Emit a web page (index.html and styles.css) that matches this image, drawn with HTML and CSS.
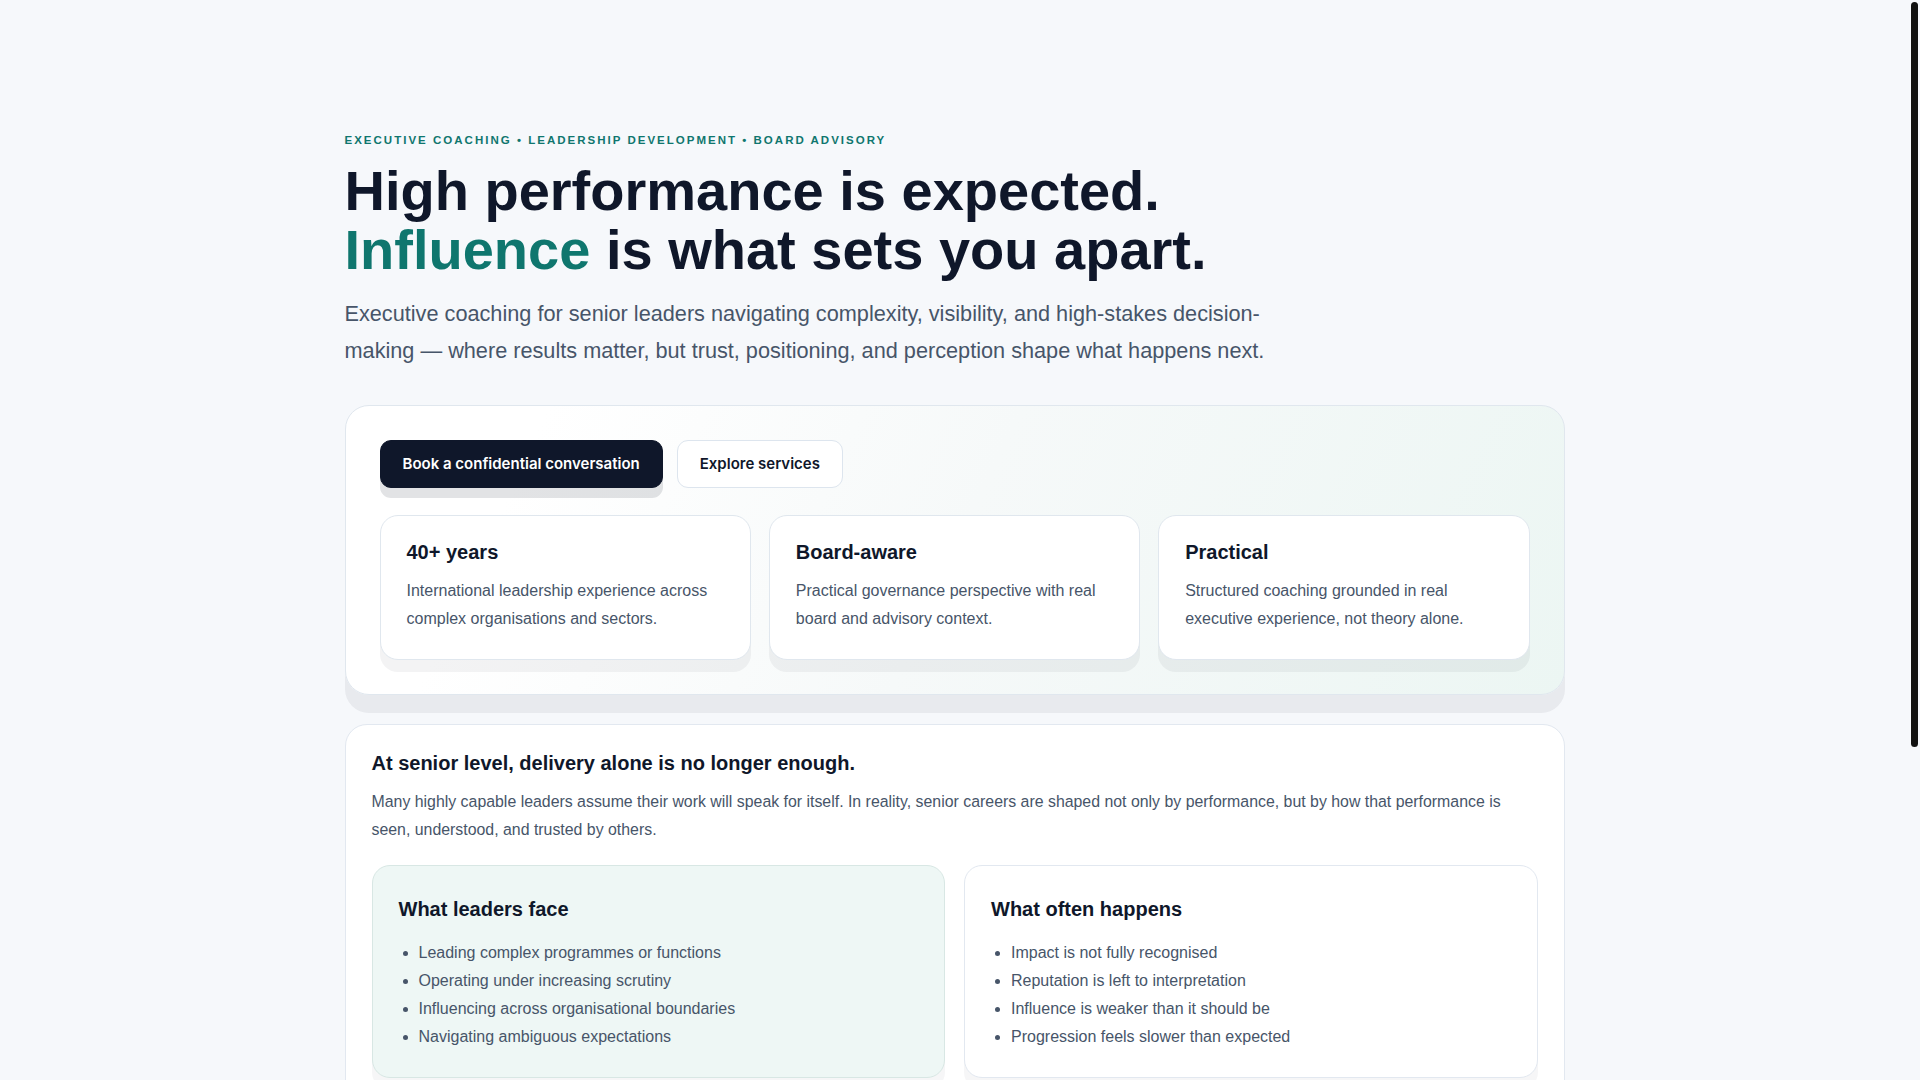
FILE: index.html
```html
<!DOCTYPE html>
<html lang="en">
<head>
<meta charset="utf-8">
<title>Executive Coaching</title>
<link rel="stylesheet" href="styles.css">
</head>
<body>
<main class="page">
  <section class="hero">
    <p class="eyebrow">Executive coaching • Leadership development • Board advisory</p>
    <h1 class="headline">High performance is expected.<br><span class="accent">Influence</span> is what sets you apart.</h1>
    <p class="lead">Executive coaching for senior leaders navigating complexity, visibility, and high-stakes decision-making — where results matter, but trust, positioning, and perception shape what happens next.</p>

    <div class="hero-card">
      <div class="actions">
        <a class="btn btn-primary" href="#">Book a confidential conversation</a>
        <a class="btn btn-secondary" href="#">Explore services</a>
      </div>
      <div class="stats">
        <div class="stat">
          <h3 class="stat-title">40+ years</h3>
          <p class="stat-text">International leadership experience across complex organisations and sectors.</p>
        </div>
        <div class="stat">
          <h3 class="stat-title">Board-aware</h3>
          <p class="stat-text">Practical governance perspective with real board and advisory context.</p>
        </div>
        <div class="stat">
          <h3 class="stat-title">Practical</h3>
          <p class="stat-text">Structured coaching grounded in real executive experience, not theory alone.</p>
        </div>
      </div>
    </div>
  </section>

  <section class="panel">
    <h2 class="panel-title">At senior level, delivery alone is no longer enough.</h2>
    <p class="panel-text">Many highly capable leaders assume their work will speak for itself. In reality, senior careers are shaped not only by performance, but by how that performance is seen, understood, and trusted by others.</p>
    <div class="columns">
      <div class="box box-tint">
        <h3 class="box-title">What leaders face</h3>
        <ul class="box-list">
          <li>Leading complex programmes or functions</li>
          <li>Operating under increasing scrutiny</li>
          <li>Influencing across organisational boundaries</li>
          <li>Navigating ambiguous expectations</li>
        </ul>
      </div>
      <div class="box">
        <h3 class="box-title">What often happens</h3>
        <ul class="box-list">
          <li>Impact is not fully recognised</li>
          <li>Reputation is left to interpretation</li>
          <li>Influence is weaker than it should be</li>
          <li>Progression feels slower than expected</li>
        </ul>
      </div>
    </div>
  </section>
</main>
<div class="scroll-thumb" aria-hidden="true"></div>
</body>
</html>
```

FILE: styles.css
```css
html {
  background: #f6f8fb;
  scrollbar-width: none;
}

html::-webkit-scrollbar {
  display: none;
}

body {
  margin: 0;
  padding-right: 11px;
  background: #f6f8fb;
  font-family: "Liberation Sans", Arial, sans-serif;
  color: #0f172a;
}

.scroll-thumb {
  position: fixed;
  top: 2px;
  right: 2px;
  width: 7px;
  height: 745px;
  background: #111111;
  border-radius: 4px;
}

.page {
  max-width: 1220px;
  margin: 0 auto;
  padding: 132px 0 458px;
}

.eyebrow {
  margin: 0 0 12.5px;
  font-size: 11.5px;
  line-height: 1.5;
  font-weight: 700;
  letter-spacing: 0.175em;
  text-transform: uppercase;
  color: #0f766e;
}

.headline {
  margin: 0;
  font-size: 56px;
  line-height: 1.05;
  font-weight: 700;
  color: #0f172a;
}

.accent {
  color: #0f766e;
}

.lead {
  margin: 17px 0 0;
  max-width: 950px;
  font-size: 21.7px;
  line-height: 1.69;
  color: #475569;
}

.hero-card {
  margin-top: 35px;
  padding: 34px;
  border: 1px solid #e0e7ee;
  border-radius: 24px;
  background: linear-gradient(115deg, #ffffff 15%, #f6f9f9 50%, #ecf6f3 100%);
  box-shadow: 0 18px 0 rgba(15, 23, 42, 0.06);
}

.actions {
  display: flex;
  gap: 14px;
}

.btn {
  display: inline-flex;
  align-items: center;
  padding: 14px 22px;
  border: 1px solid transparent;
  border-radius: 11px;
  font-family: Inter, "Liberation Sans", sans-serif;
  font-size: 15px;
  line-height: 18px;
  font-weight: 600;
  text-decoration: none;
}

.btn-primary {
  background: #0f172a;
  border-color: #0f172a;
  color: #ffffff;
  box-shadow: 0 10px 0 rgba(15, 23, 42, 0.12);
}

.btn-secondary {
  background: #ffffff;
  border-color: #dde5ee;
  color: #0f172a;
}

.stats {
  margin-top: 27px;
  display: grid;
  grid-template-columns: repeat(3, 1fr);
  gap: 18px;
}

.stat {
  padding: 24px 26px 26px;
  background: #ffffff;
  border: 1px solid #e0e7ee;
  border-radius: 18px;
  box-shadow: 0 12px 0 rgba(15, 23, 42, 0.05);
}

.stat-title {
  margin: 0 0 13.5px;
  font-size: 20px;
  line-height: 24px;
  font-weight: 700;
  color: #0f172a;
}

.stat-text {
  margin: 0;
  font-size: 16px;
  line-height: 1.75;
  color: #475569;
}

.panel {
  margin-top: 29px;
  padding: 26px 26px 26px;
  background: #ffffff;
  border: 1px solid #e2e8f0;
  border-radius: 22px;
}

.panel-title {
  margin: 0 0 12.5px;
  font-size: 20px;
  line-height: 24px;
  font-weight: 700;
  color: #0f172a;
}

.panel-text {
  margin: 0;
  font-size: 15.88px;
  line-height: 28px;
  color: #475569;
}

.columns {
  margin-top: 21.5px;
  display: grid;
  grid-template-columns: 1fr 1fr;
  gap: 19px;
}

.box {
  padding: 30.5px 26px 26px;
  background: #ffffff;
  border: 1px solid #e2e8f0;
  border-radius: 18px;
  box-shadow: 0 12px 0 rgba(15, 23, 42, 0.04);
}

.box-tint {
  background: #eef7f5;
  border-color: #d8e7e4;
}

.box-title {
  margin: 0 0 18px;
  font-size: 20px;
  line-height: 24px;
  font-weight: 700;
  color: #0f172a;
}

.box-list {
  margin: 0;
  padding-left: 20px;
  font-size: 16px;
  line-height: 1.75;
  color: #475569;
}
```
